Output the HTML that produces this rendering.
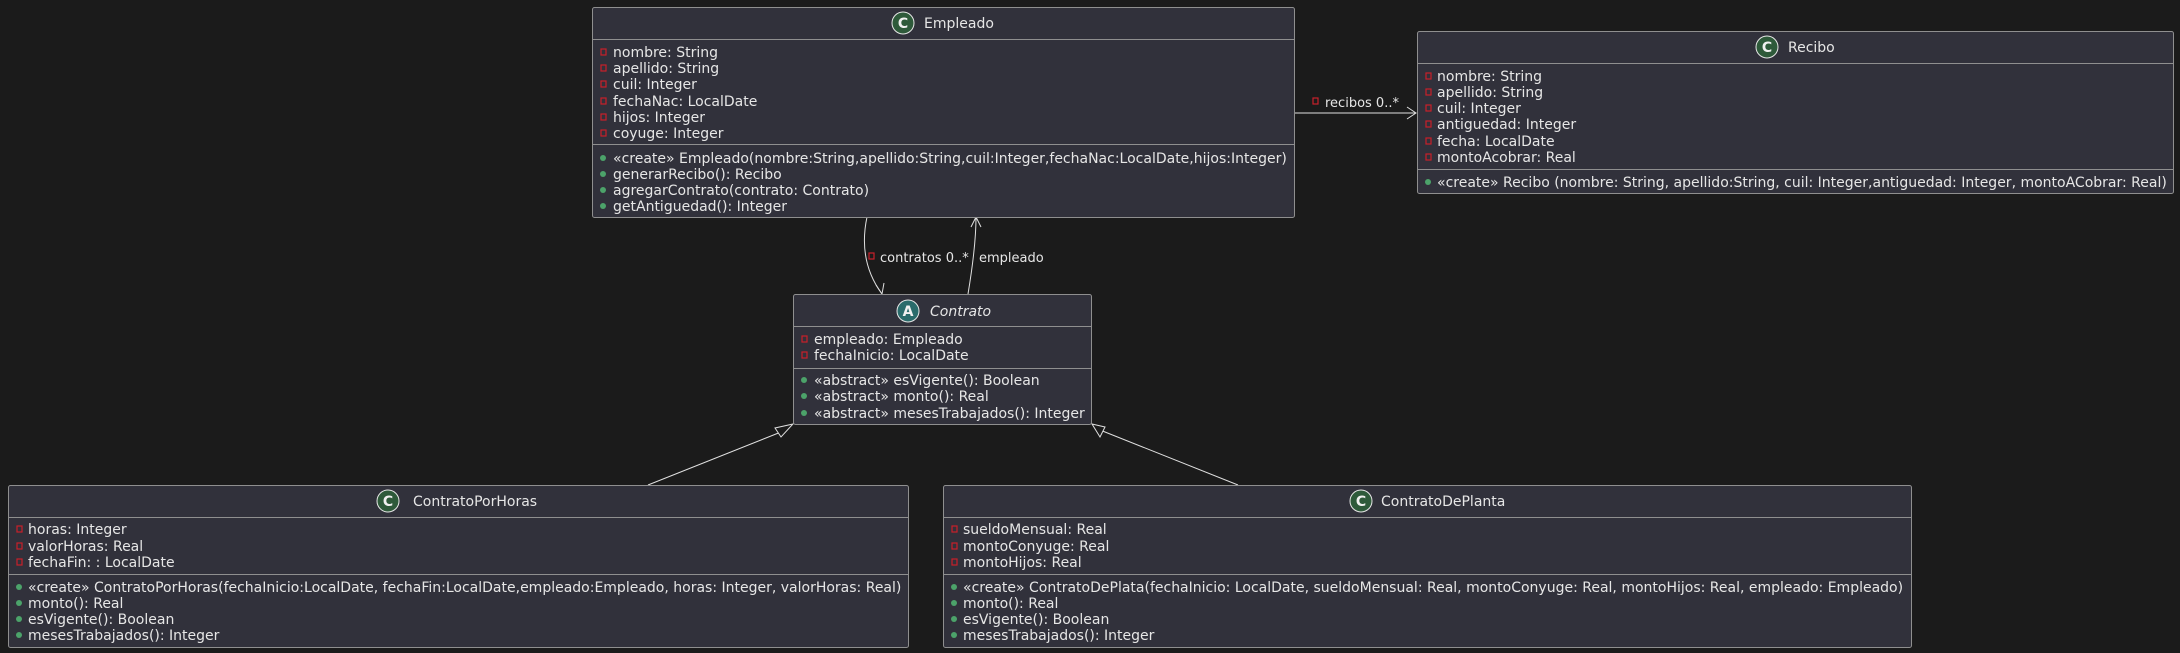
<!DOCTYPE html>
<html><head><meta charset="utf-8"><style>
html,body{margin:0;padding:0;background:#1b1b1b;}
svg{display:block}
text{font-family:"DejaVu Sans","Liberation Sans",sans-serif;font-size:14px;fill:#e6e6e6}
.box{fill:#31313b;stroke:#8f8f8f;stroke-width:1}
.div{stroke:#8f8f8f;stroke-width:1}
.ln{stroke:#e0e0e0;stroke-width:1;fill:none}
.pr{fill:none;stroke:#c8202a;stroke-width:1.2}
.pu{fill:#4ca36a}
.ci{fill:#2e5a3a;stroke:#e6e6e6;stroke-width:1}
.ai{fill:#2a6b6b;stroke:#e6e6e6;stroke-width:1}
.ic{font-weight:bold;font-size:14px;fill:#f0f0f0;text-anchor:middle}
</style></head><body>
<svg width="2180" height="653" viewBox="0 0 2180 653" xmlns="http://www.w3.org/2000/svg">
<rect width="2180" height="653" fill="#1b1b1b"/>

<!-- Relations -->
<path class="ln" d="M867 217 C860 250 868 275 882 294"/>
<path class="ln" d="M876 285 L882 294 L884 283"/>
<path class="ln" d="M968 294 C972 270 976 240 976 217"/>
<path class="ln" d="M971 227 L976 217 L981 227"/>
<rect class="pr" x="869" y="253" width="5" height="6"/>
<text x="880" y="262" style="font-size:13px">contratos 0..*</text>
<text x="979" y="262" style="font-size:13px">empleado</text>

<line class="ln" x1="1294" y1="113" x2="1416" y2="113"/>
<path class="ln" d="M1407 107 L1416 113 L1407 119"/>
<rect class="pr" x="1313" y="98" width="5" height="6"/>
<text x="1325" y="107" style="font-size:13px">recibos 0..*</text>

<line class="ln" x1="648" y1="485" x2="786" y2="430"/>
<path fill="#1b1b1b" stroke="#e0e0e0" d="M793 424 L775 428 L781 437 Z"/>
<line class="ln" x1="1238" y1="485" x2="1100" y2="430"/>
<path fill="#1b1b1b" stroke="#e0e0e0" d="M1092 424 L1105 427 L1100 437 Z"/>

<!-- Empleado -->
<rect class="box" x="592.5" y="7.5" width="702" height="210" rx="2"/>
<line class="div" x1="592" y1="39.5" x2="1294" y2="39.5"/>
<line class="div" x1="592" y1="144.5" x2="1294" y2="144.5"/>
<circle class="ci" cx="903" cy="23" r="11"/><text class="ic" x="903" y="28">C</text>
<text x="924" y="28">Empleado</text>
<g>
<rect class="pr" x="601" y="49" width="5" height="6"/><text x="613" y="57">nombre: String</text>
<rect class="pr" x="601" y="65" width="5" height="6"/><text x="613" y="73">apellido: String</text>
<rect class="pr" x="601" y="81" width="5" height="6"/><text x="613" y="89">cuil: Integer</text>
<rect class="pr" x="601" y="98" width="5" height="6"/><text x="613" y="106">fechaNac: LocalDate</text>
<rect class="pr" x="601" y="114" width="5" height="6"/><text x="613" y="122">hijos: Integer</text>
<rect class="pr" x="601" y="130" width="5" height="6"/><text x="613" y="138">coyuge: Integer</text>
<circle class="pu" cx="603" cy="158" r="3"/><text x="613" y="163">«create» Empleado(nombre:String,apellido:String,cuil:Integer,fechaNac:LocalDate,hijos:Integer)</text>
<circle class="pu" cx="603" cy="174" r="3"/><text x="613" y="179">generarRecibo(): Recibo</text>
<circle class="pu" cx="603" cy="190" r="3"/><text x="613" y="195">agregarContrato(contrato: Contrato)</text>
<circle class="pu" cx="603" cy="206" r="3"/><text x="613" y="211">getAntiguedad(): Integer</text>
</g>

<!-- Recibo -->
<rect class="box" x="1417.5" y="31.5" width="756" height="162" rx="2"/>
<line class="div" x1="1417" y1="63.5" x2="2174" y2="63.5"/>
<line class="div" x1="1417" y1="169.5" x2="2174" y2="169.5"/>
<circle class="ci" cx="1767" cy="47" r="11"/><text class="ic" x="1767" y="52">C</text>
<text x="1788" y="52">Recibo</text>
<rect class="pr" x="1426" y="73" width="5" height="6"/><text x="1437" y="81">nombre: String</text>
<rect class="pr" x="1426" y="89" width="5" height="6"/><text x="1437" y="97">apellido: String</text>
<rect class="pr" x="1426" y="105" width="5" height="6"/><text x="1437" y="113">cuil: Integer</text>
<rect class="pr" x="1426" y="121" width="5" height="6"/><text x="1437" y="129">antiguedad: Integer</text>
<rect class="pr" x="1426" y="138" width="5" height="6"/><text x="1437" y="146">fecha: LocalDate</text>
<rect class="pr" x="1426" y="154" width="5" height="6"/><text x="1437" y="162">montoAcobrar: Real</text>
<circle class="pu" cx="1428" cy="182" r="3"/><text x="1437" y="187">«create» Recibo (nombre: String, apellido:String, cuil: Integer,antiguedad: Integer, montoACobrar: Real)</text>

<!-- Contrato -->
<rect class="box" x="793.5" y="294.5" width="298" height="130" rx="2"/>
<line class="div" x1="793" y1="326.5" x2="1092" y2="326.5"/>
<line class="div" x1="793" y1="368.5" x2="1092" y2="368.5"/>
<circle class="ai" cx="908" cy="311" r="11"/><text class="ic" x="908" y="316">A</text>
<text x="930" y="316" font-style="italic">Contrato</text>
<rect class="pr" x="802" y="336" width="5" height="6"/><text x="814" y="344">empleado: Empleado</text>
<rect class="pr" x="802" y="352" width="5" height="6"/><text x="814" y="360">fechaInicio: LocalDate</text>
<circle class="pu" cx="804" cy="380" r="3"/><text x="814" y="385">«abstract» esVigente(): Boolean</text>
<circle class="pu" cx="804" cy="396" r="3"/><text x="814" y="401">«abstract» monto(): Real</text>
<circle class="pu" cx="804" cy="413" r="3"/><text x="814" y="418">«abstract» mesesTrabajados(): Integer</text>

<!-- ContratoPorHoras -->
<rect class="box" x="8.5" y="485.5" width="900" height="162" rx="2"/>
<line class="div" x1="8" y1="517.5" x2="909" y2="517.5"/>
<line class="div" x1="8" y1="574.5" x2="909" y2="574.5"/>
<circle class="ci" cx="388" cy="501" r="11"/><text class="ic" x="388" y="506">C</text>
<text x="413" y="506">ContratoPorHoras</text>
<rect class="pr" x="17" y="526" width="5" height="6"/><text x="28" y="534">horas: Integer</text>
<rect class="pr" x="17" y="543" width="5" height="6"/><text x="28" y="551">valorHoras: Real</text>
<rect class="pr" x="17" y="559" width="5" height="6"/><text x="28" y="567">fechaFin: : LocalDate</text>
<circle class="pu" cx="19" cy="587" r="3"/><text x="28" y="592">«create» ContratoPorHoras(fechaInicio:LocalDate, fechaFin:LocalDate,empleado:Empleado, horas: Integer, valorHoras: Real)</text>
<circle class="pu" cx="19" cy="603" r="3"/><text x="28" y="608">monto(): Real</text>
<circle class="pu" cx="19" cy="619" r="3"/><text x="28" y="624">esVigente(): Boolean</text>
<circle class="pu" cx="19" cy="635" r="3"/><text x="28" y="640">mesesTrabajados(): Integer</text>

<!-- ContratoDePlanta -->
<rect class="box" x="943.5" y="485.5" width="968" height="162" rx="2"/>
<line class="div" x1="943" y1="517.5" x2="1912" y2="517.5"/>
<line class="div" x1="943" y1="574.5" x2="1912" y2="574.5"/>
<circle class="ci" cx="1361" cy="501" r="11"/><text class="ic" x="1361" y="506">C</text>
<text x="1381" y="506">ContratoDePlanta</text>
<rect class="pr" x="952" y="526" width="5" height="6"/><text x="963" y="534">sueldoMensual: Real</text>
<rect class="pr" x="952" y="543" width="5" height="6"/><text x="963" y="551">montoConyuge: Real</text>
<rect class="pr" x="952" y="559" width="5" height="6"/><text x="963" y="567">montoHijos: Real</text>
<circle class="pu" cx="954" cy="587" r="3"/><text x="963" y="592">«create» ContratoDePlata(fechaInicio: LocalDate, sueldoMensual: Real, montoConyuge: Real, montoHijos: Real, empleado: Empleado)</text>
<circle class="pu" cx="954" cy="603" r="3"/><text x="963" y="608">monto(): Real</text>
<circle class="pu" cx="954" cy="619" r="3"/><text x="963" y="624">esVigente(): Boolean</text>
<circle class="pu" cx="954" cy="635" r="3"/><text x="963" y="640">mesesTrabajados(): Integer</text>
</svg>
</body></html>
